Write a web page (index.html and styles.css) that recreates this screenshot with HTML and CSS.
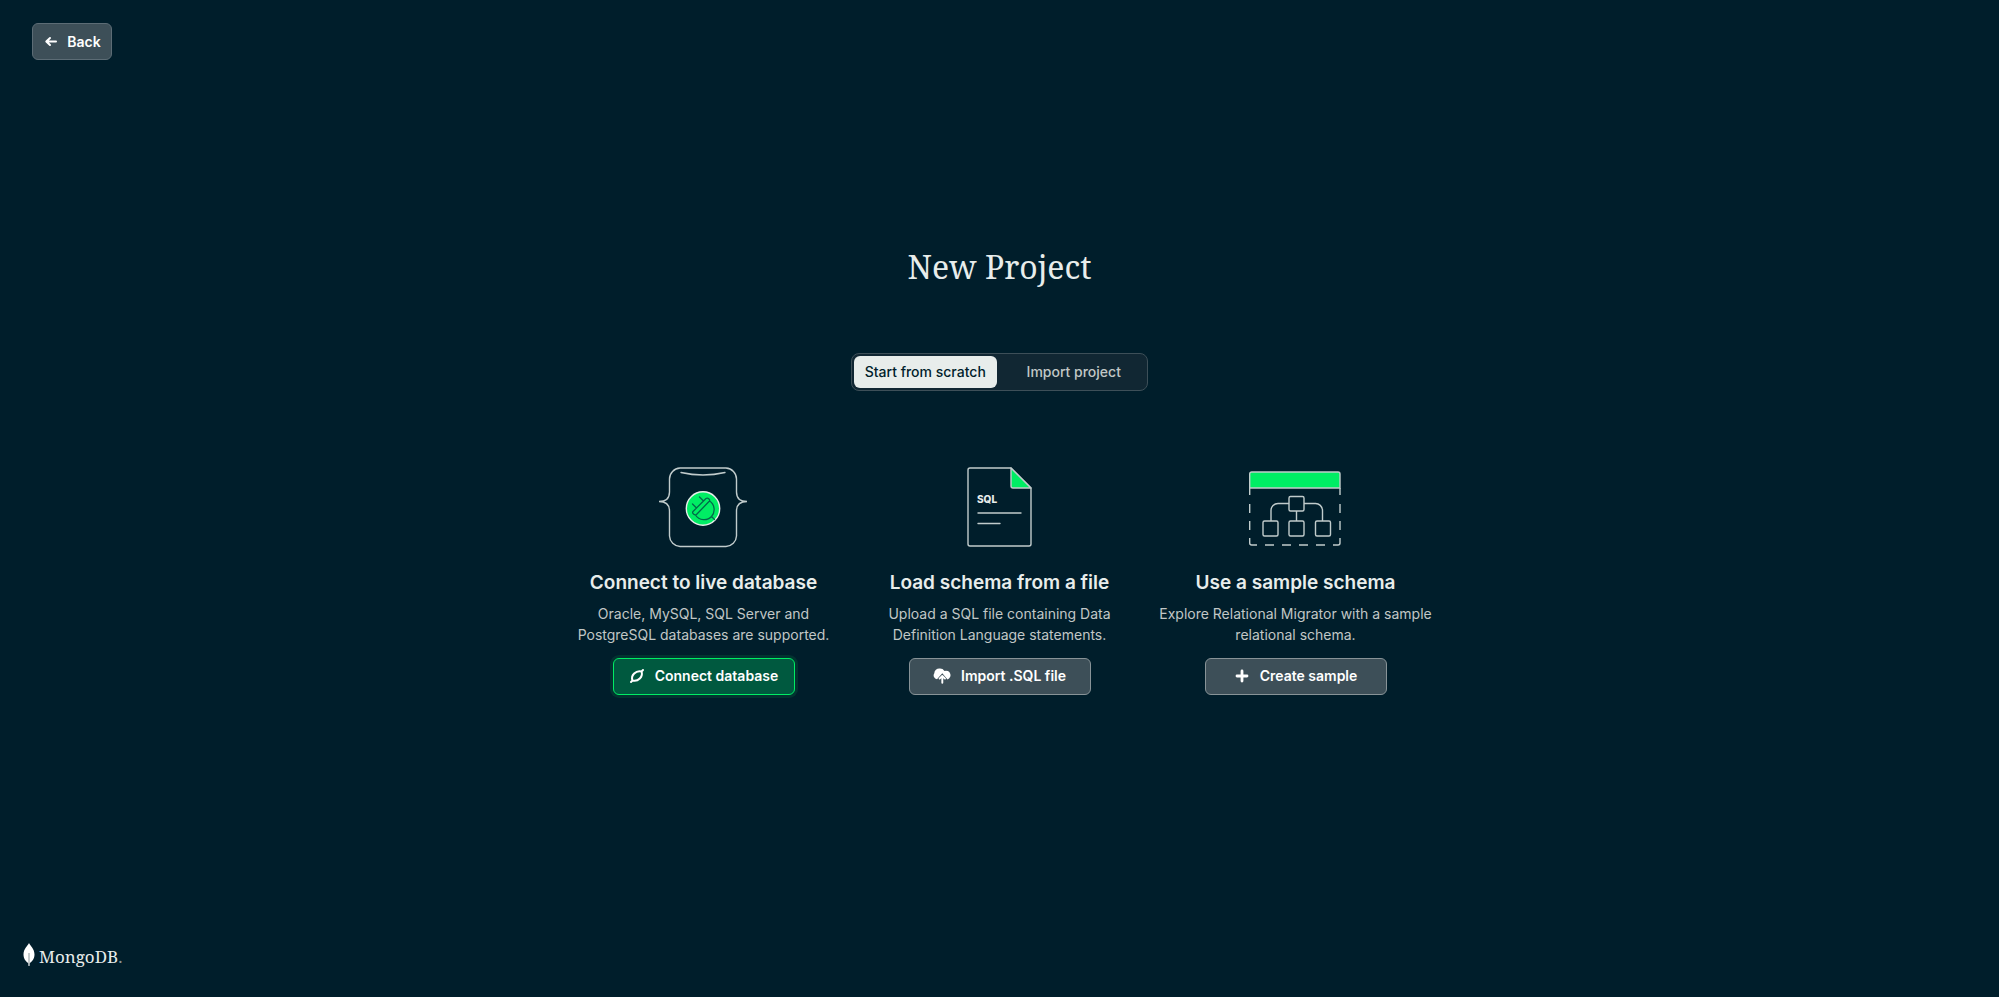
FILE: index.html
```html
<!DOCTYPE html>
<html lang="en">
<head>
<meta charset="utf-8">
<title>New Project</title>
<link rel="stylesheet" href="styles.css">
</head>
<body>
<div class="page">
  <header class="topbar">
    <button class="btn btn-back" type="button">
      <svg class="btn-icon" width="16" height="16" viewBox="0 0 16 16" fill="none" stroke="currentColor" stroke-width="2" stroke-linecap="round" stroke-linejoin="round"><path d="M13 7.500H4M7 4L3.300 7.500L7 11"/></svg>
      Back
    </button>
  </header>

  <main class="content">
    <h1 class="title">New Project</h1>

    <div class="segments" role="tablist">
      <button class="segment segment-active" type="button" role="tab" aria-selected="true">Start from scratch</button>
      <button class="segment" type="button" role="tab" aria-selected="false">Import project</button>
    </div>

    <div class="options">
      <section class="option">
        <svg class="art" width="90" height="82" viewBox="0 0 90 82" fill="none" stroke="#c1cccc" stroke-width="1.400">
          <path d="M21 1H67A11 11 0 0 1 77.500 12V25C77.500 31 81 34.500 88 34.500C81 34.500 77.500 38 77.500 44V69A11 11 0 0 1 67 79.500H21A11 11 0 0 1 10.500 69V44C10.500 38 7 34.500 0 34.500C7 34.500 10.500 31 10.500 25V12A11 11 0 0 1 21 1Z"/>
          <path d="M22 5.500Q44 10.500 66 5.500" stroke-linecap="round"/>
          <circle cx="44" cy="41.500" r="16.700" fill="#00ed64" stroke="#e8edeb"/>
          <g transform="translate(44 41.500)" stroke="#00684a" stroke-width="1.300" stroke-linecap="round" stroke-linejoin="round"><path d="M-10 3L3 -10Q4.500 -11 6 -9.500T6 -7L-6.500 6Q-8 7 -9.500 5.500T-10 3ZM-7.500 6.500C-4 12.500 4.500 12.500 8.500 8C12.500 3.500 12 -4 6.500 -7.500M-6.500 -.5L-10.500 -4.500M.5 -7.500L-3.500 -11.500M8.500 8L11.500 11"/></g>
        </svg>
        <h2 class="option-title">Connect to live database</h2>
        <p class="option-text">Oracle, MySQL, SQL Server and PostgreSQL databases are supported.</p>
        <button class="btn btn-wide btn-primary" type="button">
          <svg class="btn-icon" width="16" height="16" viewBox="0 0 16 16" fill="none" stroke="currentColor" stroke-width="2" stroke-linecap="round" stroke-linejoin="round"><path d="M3.500 12.500C1.500 7.500 7 2 12.500 3.500C14.500 8.500 9 14 3.500 12.500ZM3.500 12.500L2 14M12.500 3.500L14 2"/></svg>
          Connect database
        </button>
      </section>

      <section class="option">
        <svg class="art" width="90" height="82" viewBox="0 0 90 82" fill="none" stroke="#c1cccc" stroke-width="1.400">
          <path d="M56 1H15A2 2 0 0 0 13 3V77A2 2 0 0 0 15 79H74A2 2 0 0 0 76 77V21Z" stroke-linejoin="round"/>
          <path d="M56 1V19A2 2 0 0 0 58 21H76Z" fill="#00ed64" stroke-linejoin="round"/>
          <text class="art-label" x="22" y="36">SQL</text>
          <path d="M23 46H66M23 56.500H45" stroke-linecap="round"/>
        </svg>
        <h2 class="option-title">Load schema from a file</h2>
        <p class="option-text">Upload a SQL file containing Data Definition Language statements.</p>
        <button class="btn btn-wide" type="button">
          <svg class="btn-icon" width="18" height="16" viewBox="0 0 18 16"><path fill="currentColor" d="M6.500 .5A5.500 5.500 0 0 1 11.500 2.900A4.500 4.500 0 0 1 14.500 11.400L9.300 5.300L4 11.200A3.800 3.800 0 0 1 1.300 5.300A5 5 0 0 1 6.500 .5Z"/><path d="M9.300 14.800V8.500M6.600 10.600L9.300 7.900L12 10.600" fill="none" stroke="currentColor" stroke-width="1.900" stroke-linecap="round" stroke-linejoin="round"/></svg>
          Import .SQL file
        </button>
      </section>

      <section class="option">
        <svg class="art" width="94" height="82" viewBox="0 0 94 82" fill="none" stroke="#c1cccc" stroke-width="1.400">
          <path d="M.7 21V7A2 2 0 0 1 2.700 5H89A2 2 0 0 1 91 7V21Z" fill="#00ed64"/>
          <path d="M.7 21V28M91 21V28M.7 37V46M91 37V46M.7 54V63M91 54V63M.7 71V76A2 2 0 0 0 2.700 78H8M91 71V76A2 2 0 0 1 89 78H84M16 78H25M33 78H42M50 78H59M67 78H76"/>
          <path d="M40 36.500H29A7 7 0 0 0 22 43.500V54M55 36.500H66A7 7 0 0 1 73.500 43.500V54M47.500 44V54"/>
          <rect x="40" y="29.500" width="15" height="14.500" rx="1.500"/>
          <rect x="14" y="54" width="15" height="15" rx="1.500"/>
          <rect x="40" y="54" width="15" height="15" rx="1.500"/>
          <rect x="66.500" y="54" width="15" height="15" rx="1.500"/>
        </svg>
        <h2 class="option-title">Use a sample schema</h2>
        <p class="option-text">Explore Relational Migrator with a sample relational schema.</p>
        <button class="btn btn-wide" type="button">
          <svg class="btn-icon" width="16" height="16" viewBox="0 0 16 16" fill="none" stroke="currentColor" stroke-width="2.800" stroke-linecap="round"><path d="M8 3V13M3 8H13"/></svg>
          Create sample
        </button>
      </section>
    </div>
  </main>

  <footer class="footer">
    <svg width="12" height="24" viewBox="0 0 12 24"><path fill="#fff" d="M6 0C7 2.500 11.500 5.500 11.500 11.500C11.500 16 9 18.500 6.800 20L6.500 23H5.500L5.200 20C3 18.500.5 16 .5 11.500C.5 5.500 5 2.500 6 0Z"/><path d="M6 10V22" stroke="#8c999c" stroke-width="1"/></svg>
    <span class="wordmark">MongoDB<span class="wordmark-dot">.</span></span>
  </footer>
</div>
</body>
</html>
```
FILE: styles.css
```css
* {
  box-sizing: border-box;
}

body {
  margin: 0;
  background: #001e2b;
  color: #e8edeb;
  font-family: "Inter", "Liberation Sans", sans-serif;
  font-size: 14px;
}

.page {
  min-height: 100vh;
  display: flex;
  flex-direction: column;
}

.topbar {
  padding: 23px 32px 0;
}

.btn {
  display: inline-flex;
  align-items: center;
  justify-content: center;
  gap: 10px;
  height: 37px;
  padding: 0 12px;
  border: 1px solid #889397;
  border-radius: 6px;
  background: #3d4f58;
  color: #fff;
  font: 600 14px/20px "Inter", "Liberation Sans", sans-serif;
}

.btn-back {
  width: 80px;
  padding: 0;
  gap: 8px;
  border-color: #5c6c75;
}

.btn-icon {
  flex: none;
}

.btn-wide {
  width: 182px;
}

.btn-primary {
  background: #00593f;
  border-color: #00ed64;
  box-shadow: 0 0 0 3px #023430;
}

.content {
  flex: 1;
  display: flex;
  flex-direction: column;
  align-items: center;
  justify-content: center;
}

.title {
  margin: 0;
  font: 400 32px/48px "Noto Serif", "Liberation Serif", serif;
}

.segments {
  display: grid;
  grid-template-columns: 1fr 1fr;
  gap: 6px;
  width: 297px;
  margin-top: 62px;
  padding: 2px;
  border: 1px solid #3d4f58;
  border-radius: 8px;
  background: #112733;
}

.segment {
  height: 32px;
  padding: 0;
  border: 0;
  border-radius: 6px;
  background: transparent;
  color: #c1c7c6;
  font: 500 14px/20px "Inter", "Liberation Sans", sans-serif;
}

.segment-active {
  background: #e8edeb;
  color: #001e2b;
}

.options {
  display: grid;
  grid-template-columns: repeat(3, 280px);
  gap: 16px;
  margin-top: 76px;
}

.option {
  display: flex;
  flex-direction: column;
  align-items: center;
  text-align: center;
}

.art-label {
  fill: #e8edeb;
  stroke: none;
  font: 800 10px "Inter", sans-serif;
}

.option-title {
  margin: 22px 0 0;
  font-size: 19px;
  line-height: 24px;
  font-weight: 600;
}

.option-text {
  margin: 8px 0 13px;
  color: #c1c7c6;
  line-height: 21px;
}

.footer {
  display: flex;
  align-items: flex-start;
  gap: 4px;
  padding: 66px 23px 26px;
}

.wordmark {
  font: 400 17px/28px "Noto Serif", "Liberation Serif", serif;
}

.wordmark-dot {
  color: #889397;
}
```
